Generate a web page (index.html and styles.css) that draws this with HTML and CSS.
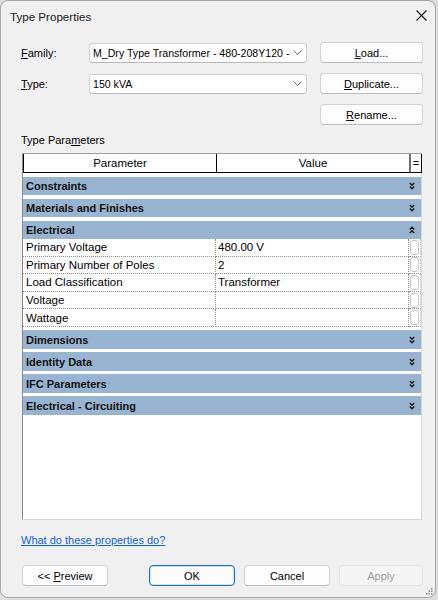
FILE: index.html
```html
<!DOCTYPE html>
<html>
<head>
<meta charset="utf-8">
<link rel="stylesheet" href="styles.css">
</head>
<body>
<div class="dialog">
  <div class="titlebar">
    <span class="title">Type Properties</span>
    <svg class="close" width="11" height="11" viewBox="0 0 11 11"><path d="M0.5 0.5 L10.5 10.5 M10.5 0.5 L0.5 10.5" stroke="#1a1a1a" stroke-width="1.1" fill="none"/></svg>
  </div>
  <div class="content">
    <div class="form">
      <div class="lbl"><u>F</u>amily:</div>
      <div class="combo"><span class="combo-text">M_Dry Type Transformer - 480-208Y120 -</span><svg class="chev" width="9" height="5" viewBox="0 0 9 5"><path d="M0.5 0.5 L4.5 4.5 L8.5 0.5" stroke="#6a6a6a" stroke-width="1" fill="none"/></svg></div>
      <div class="btn"><span><u>L</u>oad...</span></div>
      <div class="lbl"><u>T</u>ype:</div>
      <div class="combo"><span class="combo-text">150 kVA</span><svg class="chev" width="9" height="5" viewBox="0 0 9 5"><path d="M0.5 0.5 L4.5 4.5 L8.5 0.5" stroke="#6a6a6a" stroke-width="1" fill="none"/></svg></div>
      <div class="btn"><span><u>D</u>uplicate...</span></div>
      <div class="btn col3"><span><u>R</u>ename...</span></div>
    </div>
    <div class="section-label">Type Para<u>m</u>eters</div>
    <div class="table">
      <div class="head">
        <div class="hc">Parameter</div>
        <div class="hc">Value</div>
        <div class="hc eq">=</div>
      </div>
      <div class="group">Constraints<svg class="gchev" width="6" height="8" viewBox="0 0 6 8"><path d="M0.8 1 L3 3.3 L5.2 1 M0.8 4.4 L3 6.7 L5.2 4.4" stroke="#1a1a1a" stroke-width="1.4" fill="none"/></svg></div>
      <div class="group">Materials and Finishes<svg class="gchev" width="6" height="8" viewBox="0 0 6 8"><path d="M0.8 1 L3 3.3 L5.2 1 M0.8 4.4 L3 6.7 L5.2 4.4" stroke="#1a1a1a" stroke-width="1.4" fill="none"/></svg></div>
      <div class="group">Electrical<svg class="gchev" width="6" height="8" viewBox="0 0 6 8"><path d="M0.8 3.6 L3 1.3 L5.2 3.6 M0.8 7 L3 4.7 L5.2 7" stroke="#1a1a1a" stroke-width="1.4" fill="none"/></svg></div>
      <div class="prop"><div class="pc">Primary Voltage</div><div class="pc">480.00 V</div><div class="pc eqc"><span class="mini"></span></div></div>
      <div class="prop"><div class="pc">Primary Number of Poles</div><div class="pc">2</div><div class="pc eqc"><span class="mini"></span></div></div>
      <div class="prop"><div class="pc">Load Classification</div><div class="pc">Transformer</div><div class="pc eqc"><span class="mini"></span></div></div>
      <div class="prop"><div class="pc">Voltage</div><div class="pc"></div><div class="pc eqc"><span class="mini"></span></div></div>
      <div class="prop"><div class="pc">Wattage</div><div class="pc"></div><div class="pc eqc"><span class="mini"></span></div></div>
      <div class="group">Dimensions<svg class="gchev" width="6" height="8" viewBox="0 0 6 8"><path d="M0.8 1 L3 3.3 L5.2 1 M0.8 4.4 L3 6.7 L5.2 4.4" stroke="#1a1a1a" stroke-width="1.4" fill="none"/></svg></div>
      <div class="group">Identity Data<svg class="gchev" width="6" height="8" viewBox="0 0 6 8"><path d="M0.8 1 L3 3.3 L5.2 1 M0.8 4.4 L3 6.7 L5.2 4.4" stroke="#1a1a1a" stroke-width="1.4" fill="none"/></svg></div>
      <div class="group">IFC Parameters<svg class="gchev" width="6" height="8" viewBox="0 0 6 8"><path d="M0.8 1 L3 3.3 L5.2 1 M0.8 4.4 L3 6.7 L5.2 4.4" stroke="#1a1a1a" stroke-width="1.4" fill="none"/></svg></div>
      <div class="group">Electrical - Circuiting<svg class="gchev" width="6" height="8" viewBox="0 0 6 8"><path d="M0.8 1 L3 3.3 L5.2 1 M0.8 4.4 L3 6.7 L5.2 4.4" stroke="#1a1a1a" stroke-width="1.4" fill="none"/></svg></div>
    </div>
    <a class="help" href="#">What do these properties do?</a>
    <div class="buttons">
      <div class="btn b-preview"><span>&lt;&lt; <u>P</u>review</span></div>
      <div class="btn b-ok"><span>OK</span></div>
      <div class="btn b-cancel"><span>Cancel</span></div>
      <div class="btn b-apply"><span>Apply</span></div>
    </div>
  </div>
  <svg class="grip" width="7" height="7" viewBox="0 0 7 7">
    <rect x="5" y="0" width="1.5" height="1.5" fill="#8a8a8a"/>
    <rect x="2.5" y="2.5" width="1.5" height="1.5" fill="#8a8a8a"/>
    <rect x="5" y="2.5" width="1.5" height="1.5" fill="#8a8a8a"/>
    <rect x="0" y="5" width="1.5" height="1.5" fill="#8a8a8a"/>
    <rect x="2.5" y="5" width="1.5" height="1.5" fill="#8a8a8a"/>
    <rect x="5" y="5" width="1.5" height="1.5" fill="#8a8a8a"/>
  </svg>
</div>
</body>
</html>
```

FILE: styles.css
```css
* { box-sizing: border-box; }
html, body { margin: 0; padding: 0; }
body {
  width: 438px;
  height: 600px;
  overflow: hidden;
  background: #dcdcdc;
  font-family: "Liberation Sans", Arial, sans-serif;
  font-size: 11px;
  color: #000;
}
.dialog {
  position: relative;
  width: 436px;
  height: 598px;
  background: #f0f0f0;
  border: 1px solid #a6a6a6;
  border-radius: 8px;
  display: flex;
  flex-direction: column;
}
.titlebar {
  height: 29px;
  display: flex;
  align-items: center;
  justify-content: space-between;
  padding: 1px 8px 0 9px;
  font-size: 11.6px;
  color: #1a1a1a;
}
.close { display: block; margin-top: -1px; }
.content {
  display: flex;
  flex-direction: column;
  padding: 0 12px 0 20px;
}
.form {
  margin-top: 12px;
  display: grid;
  grid-template-columns: 68px 231px 103px;
  grid-auto-rows: 21px;
  row-gap: 10px;
  align-items: center;
}
.lbl { color: #000; }
.combo {
  width: 218px;
  height: 20px;
  background: #fff;
  border: 1px solid #d0d0d0;
  border-bottom-color: #b8b8b8;
  border-radius: 3px;
  display: flex;
  align-items: center;
  padding: 0 4px 0 3px;
  font-size: 11px;
}
.combo-text {
  white-space: nowrap;
  font-size: 10.6px;
}
.chev { margin-left: auto; display: block; }
.btn {
  height: 21px;
  display: flex;
  align-items: center;
  justify-content: center;
  background: #fdfdfd;
  border: 1px solid #d2d2d2;
  border-bottom-color: #bdbdbd;
  border-radius: 4px;
  color: #000;
  white-space: pre;
}
.col3 { grid-column: 3; }
.section-label {
  margin-top: 8px;
  height: 14px;
  line-height: 14px;
}
.table {
  margin-top: 6px;
  margin-left: 1px;
  width: 400px;
  height: 367px;
  background: #fff;
  border: 1px solid;
  border-color: #a0a0a0 #d6d6d6 #d6d6d6 #8c8c8c;
  display: flex;
  flex-direction: column;
}
.head {
  display: grid;
  grid-template-columns: 193px 193px 12px;
  height: 19px;
  border-left: 1px solid #000;
}
.hc {
  border-right: 1px solid #000;
  border-bottom: 1px solid #000;
  display: flex;
  align-items: center;
  justify-content: center;
  font-size: 11.5px;
  padding-bottom: 1px;
}
.hc.eq { border-left: 2px solid #6f6f6f; margin-left: -1px; font-size: 11px; }
.group {
  margin-top: 3.5px;
  height: 18.5px;
  background: #99b4d1;
  display: flex;
  align-items: center;
  justify-content: space-between;
  padding: 0 6px 0 3px;
  font-weight: bold;
  font-size: 11px;
  color: #111;
}
.gchev { display: block; }
.prop {
  display: grid;
  grid-template-columns: 193px 193px 12px;
  height: 17.6px;
}
.pc {
  border-bottom: 1px dotted #8c8c8c;
  border-right: 1px dotted #8c8c8c;
  display: flex;
  align-items: center;
  padding-left: 2px;
  font-size: 11.5px;
  white-space: nowrap;
  color: #000;
}
.prop .pc:first-child { padding-left: 3px; }
.pc.eqc { padding: 0 0 0 1px; border-right: 1px dotted #bdbdbd; }
.mini {
  width: 9px;
  height: 15px;
  border: 1px solid #c6c6c6;
  border-radius: 3px;
  background: #fff;
}
.help {
  margin-top: 12px;
  height: 16px;
  line-height: 16px;
  color: #1565c8;
  text-decoration: underline;
  align-self: flex-start;
}
.buttons {
  margin-top: 17px;
  display: flex;
  align-items: center;
}
.buttons .btn { width: 86px; }
.b-preview { margin-left: 1px; }
.b-ok {
  margin-left: 41px;
  border: 1px solid #1f6fc2;
  box-shadow: inset 0 0 0 1px #cfe0f3;
}
.b-cancel { margin-left: 9px; }
.b-apply {
  margin-left: 9px;
  width: 84px !important;
  background: #f5f5f5;
  border-color: #e3e3e3;
  color: #9d9d9d;
}
.grip {
  position: absolute;
  right: 2px;
  bottom: 2px;
}
```
